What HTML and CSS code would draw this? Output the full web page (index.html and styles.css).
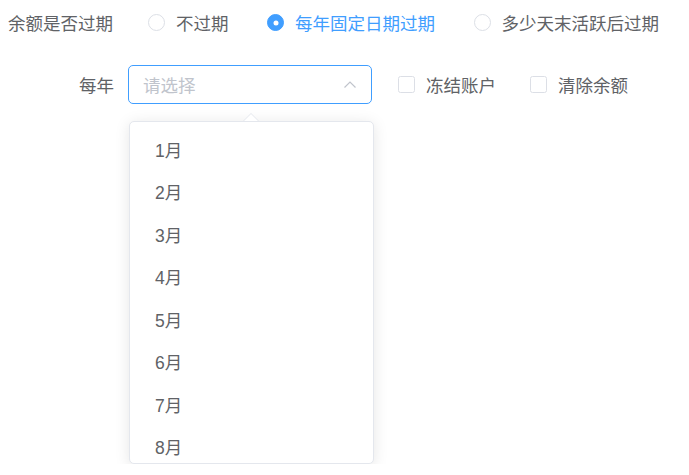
FILE: index.html
```html
<!DOCTYPE html>
<html>
<head>
<meta charset="utf-8">
<link rel="stylesheet" href="styles.css">
</head>
<body>
<div class="form">
  <div class="row row-top">
    <div class="label label-first">余额是否过期</div>
    <div class="radio-group">
      <label class="radio"><span class="radio-circle"></span><span class="radio-text">不过期</span></label>
      <label class="radio checked"><span class="radio-circle"></span><span class="radio-text">每年固定日期过期</span></label>
      <label class="radio"><span class="radio-circle"></span><span class="radio-text">多少天末活跃后过期</span></label>
    </div>
  </div>
  <div class="row row-second">
    <div class="label label-year">每年</div>
    <div class="select-wrap">
      <div class="select">
        <span class="placeholder">请选择</span>
        <svg class="chevron" width="12" height="7" viewBox="0 0 12 7"><polyline points="0.5,6.5 6,1 11.5,6.5" fill="none" stroke="#c0c4cc" stroke-width="1.2"/></svg>
      </div>
    </div>
    <label class="checkbox first-cb"><span class="box"></span><span class="cb-text">冻结账户</span></label>
    <label class="checkbox"><span class="box"></span><span class="cb-text">清除余额</span></label>
  </div>
  <div class="dropdown-area">
    <div class="dropdown">
      <span class="arrow"></span>
      <div class="option">1月</div>
      <div class="option">2月</div>
      <div class="option">3月</div>
      <div class="option">4月</div>
      <div class="option">5月</div>
      <div class="option">6月</div>
      <div class="option">7月</div>
      <div class="option">8月</div>
    </div>
  </div>
</div>
</body>
</html>
```
FILE: styles.css
```css
* { box-sizing: border-box; }
html, body { margin: 0; padding: 0; background: #fff; }
body {
  font-family: "Liberation Sans", Arial, "Noto Sans CJK SC", sans-serif;
  font-size: 17.5px;
  color: #606266;
}
.form { padding-left: 8px; }
.row { display: flex; align-items: center; }
.row-top { height: 45px; }
.row-second { margin-top: 20px; height: 39px; }
.label { white-space: nowrap; color: #606266; flex: none; }
.label-first { width: 140px; }
.label-year { width: 106px; text-align: right; margin-right: 14px; }
.radio-group { display: flex; align-items: center; flex: none; }
.radio { display: flex; align-items: center; margin-right: 38.5px; white-space: nowrap; flex: none; }
.radio:last-child { margin-right: 0; }
.radio-circle {
  width: 17px; height: 17px; border-radius: 50%;
  border: 1px solid #dcdfe6; background: #fff;
  margin-right: 11px; position: relative; flex: none;
}
.radio.checked .radio-circle { background: #409eff; border-color: #409eff; }
.radio.checked .radio-circle::after {
  content: ""; position: absolute; left: 50%; top: 50%;
  width: 5px; height: 5px; border-radius: 50%; background: #fff;
  transform: translate(-50%, -50%);
}
.radio.checked .radio-text { color: #409eff; }
.select-wrap { width: 244px; height: 39px; flex: none; }
.select {
  height: 39px; border: 1px solid #409eff; border-radius: 5px;
  display: flex; align-items: center; justify-content: space-between;
  padding: 0 15px 0 14px;
}
.placeholder { color: #c0c4cc; }
.chevron { display: block; }
.dropdown-area { padding: 17px 0 0 121px; }
.dropdown {
  position: relative; width: 245px; height: 343px;
  background: #fff; border: 1px solid #e4e7ed; border-radius: 5px;
  box-shadow: 0 2.5px 15px 0 rgba(0,0,0,0.1);
  padding-top: 7.5px;
}
.arrow {
  position: absolute; left: 113px; top: -9px; width: 0; height: 0;
  border-left: 8px solid transparent; border-right: 8px solid transparent;
  border-bottom: 8px solid #e4e7ed;
}
.arrow::after {
  content: ""; position: absolute; left: -7px; top: 1px; width: 0; height: 0;
  border-left: 7px solid transparent; border-right: 7px solid transparent;
  border-bottom: 7px solid #fff;
}
.option {
  height: 42.5px; line-height: 42.5px; padding: 0 25px;
  color: #606266; white-space: nowrap;
}
.checkbox { display: flex; align-items: center; white-space: nowrap; flex: none; }
.first-cb { margin-left: 26px; margin-right: 34px; }
.box {
  width: 17px; height: 17px; border: 1px solid #dcdfe6; border-radius: 2.5px;
  background: #fff; margin-right: 11px; flex: none;
}
```
